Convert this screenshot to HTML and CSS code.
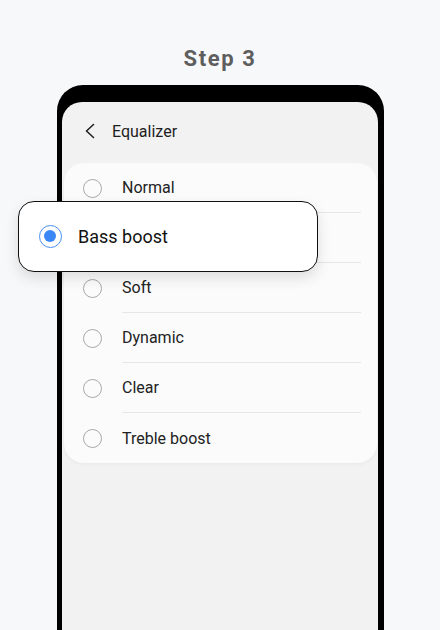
FILE: index.html
```html
<!DOCTYPE html>
<html lang="en">
<head>
    <meta charset="UTF-8">
    <meta name="viewport" content="width=device-width, initial-scale=1.0">
    <title>Step 3 - Equalizer</title>
    <link rel="stylesheet" href="styles.css">
</head>
<body>
    <h1 class="step">Step 3</h1>

    <div class="phone">
        <div class="screen">
            <div class="topbar">
                <svg class="back" width="12" height="16" viewBox="0 0 12 16">
                    <path d="M9.5 1.5 L2.5 8 L9.5 14.5" fill="none" stroke="#222" stroke-width="1.6" stroke-linecap="round" stroke-linejoin="round"/>
                </svg>
                <span class="title">Equalizer</span>
            </div>

            <ul class="options">
                <li><span class="radio"></span><span class="label">Normal</span></li>
                <li><span class="radio"></span><span class="label covered">Bass boost</span></li>
                <li><span class="radio"></span><span class="label">Soft</span></li>
                <li><span class="radio"></span><span class="label">Dynamic</span></li>
                <li><span class="radio"></span><span class="label">Clear</span></li>
                <li><span class="radio"></span><span class="label">Treble boost</span></li>
            </ul>
        </div>
    </div>

    <!-- highlighted choice, pops out over the list -->
    <div class="callout">
        <span class="radio checked"></span>
        <span class="callout-label">Bass boost</span>
    </div>
</body>
</html>
```

FILE: styles.css
```css
* {
    margin: 0;
    padding: 0;
    box-sizing: border-box;
}

body {
    font-family: Roboto, "Liberation Sans", sans-serif;
    background: #f7f8fa;
    height: 630px;
    overflow: hidden;
    position: relative;
}

.step {
    height: 85px;
    padding-top: 46px;
    text-align: center;
    font-size: 22px;
    font-weight: 700;
    letter-spacing: 1.6px;
    line-height: 26px;
    color: #5e5e5e;
}

.phone {
    margin-left: 57px;
    width: 327px;
    height: 560px;
    background: #000;
    border-radius: 26px 26px 0 0;
    padding: 17px 6px 0 5px;
}

.screen {
    height: 100%;
    background: #f2f2f2;
    border-radius: 20px 20px 0 0;
    overflow: hidden;
}

.topbar {
    height: 58px;
    display: flex;
    align-items: center;
    padding-left: 22px;
    gap: 16px;
}

.title {
    font-size: 16px;
    color: #1e1e1e;
}

.options {
    list-style: none;
    margin: 3px 1px 0 2px;
    background: #fbfbfb;
    border-radius: 20px;
    box-shadow: 0 2px 3px rgba(0, 0, 0, 0.03);
}

.options li {
    height: 50px;
    display: flex;
    align-items: center;
    padding-left: 19px;
    gap: 20px;
}

.label {
    flex: 1;
    height: 50px;
    display: flex;
    align-items: center;
    margin-right: 16px;
    font-size: 16px;
    color: #222;
    border-bottom: 1px solid #e6e6e6;
}

/* this row sits under the callout */
.label.covered {
    color: transparent;
}

.options li:last-child .label {
    border-bottom: none;
}

.radio {
    width: 19px;
    height: 19px;
    border: 1.5px solid #a8a8a8;
    border-radius: 50%;
    flex-shrink: 0;
}

.callout {
    position: absolute;
    left: 18px;
    top: 201px;
    width: 300px;
    height: 71px;
    background: #fff;
    border: 1.6px solid #111;
    border-radius: 16px;
    box-shadow: 0 6px 14px rgba(0, 0, 0, 0.12);
    display: flex;
    align-items: center;
    padding-left: 20px;
    gap: 16px;
}

.radio.checked {
    width: 23px;
    height: 23px;
    border: 1.5px solid #4a8ef2;
    position: relative;
}

.radio.checked::after {
    content: "";
    position: absolute;
    left: 4px;
    top: 4px;
    width: 12px;
    height: 12px;
    border-radius: 50%;
    background: #3b87f5;
}

.callout-label {
    font-size: 18px;
    color: #111;
}
```
